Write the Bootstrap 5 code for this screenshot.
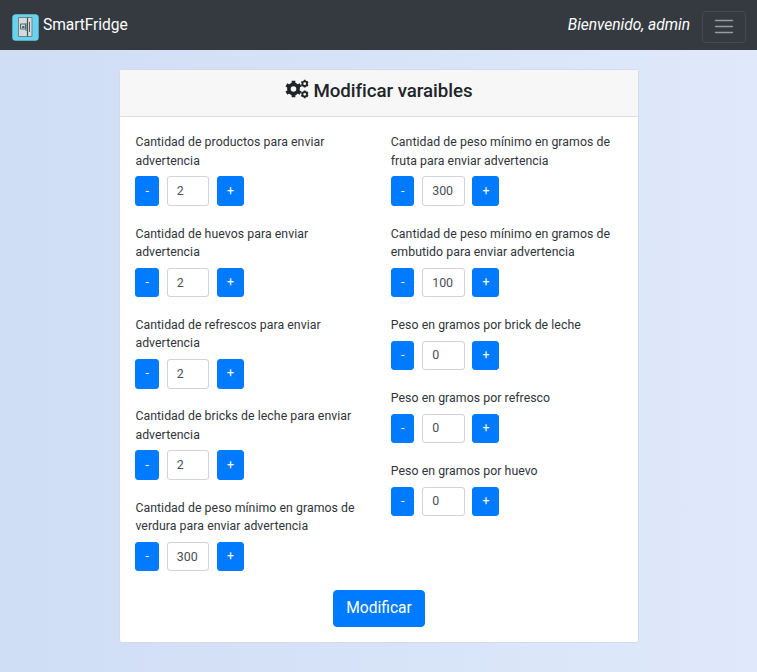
<!DOCTYPE html>
<html lang="es">
<head>
<meta charset="utf-8">
<meta name="viewport" content="width=device-width, initial-scale=1">
<title>SmartFridge</title>
<link href="https://cdn.jsdelivr.net/npm/bootstrap@5.3.0/dist/css/bootstrap.min.css" rel="stylesheet">
<style>
body{font-family:Roboto,"Liberation Sans",sans-serif;font-size:15.4px;color:#212529;min-height:672px;background:linear-gradient(90deg,#cfddf5,#dfe9fa)}
.topbar{height:50px;background:#343a40;padding:0 11px 0 12px}
.brand-text{font-size:15.6px;line-height:24px;color:#fff;letter-spacing:-.08px}
.welcome{font-size:15.6px;line-height:24px;color:#fff;letter-spacing:-.03px}
.navbar-toggler.menu-btn{width:44px;height:32px;padding:0;border:1px solid #464b51;border-radius:4px}
.panel{width:520px;height:574px;margin:19px 0 0 119px;border:1px solid #d5dbe6;border-radius:3px}
.panel-head{height:47px;background:#f7f7f7;border-bottom:1px solid #dfdfdf;padding-top:8px}
.panel-title{font-size:18.7px;line-height:26px;font-weight:500;letter-spacing:-.04px}
.panel-body{padding:16.3px 15.4px 0}
.fields{column-gap:32px}
.field-col{width:223.4px}
.field{margin-bottom:18.7px}
.field-label{display:block;font-size:12.3px;line-height:18.4px;letter-spacing:.05px;margin-bottom:6.2px;color:#30343a}
.step{height:29.7px;padding:0;font-size:12.3px;line-height:27px;background:#007bff;border-color:#007bff;border-radius:3px}
.step-minus{width:23.6px}
.step-plus{width:27px}
.steps{gap:7.8px}
.amount.form-control{width:42.5px;height:29.7px;min-height:0;padding:0 9px 1px;font-size:12.4px;color:#495057;border-color:#ced4da;border-radius:3px}
.submit{width:92px;height:37px;padding:0;font-size:15.6px;background:#007bff;border-color:#007bff;border-radius:4px}
</style>
<script src="https://cdn.jsdelivr.net/npm/bootstrap@5.3.0/dist/js/bootstrap.bundle.min.js"></script>
</head>
<body>
<nav class="topbar d-flex align-items-center justify-content-between">
  <a class="d-flex align-items-center text-decoration-none pt-1" href="#">
    <svg class="me-1" width="27" height="27" viewBox="0 0 27 27"><rect x=".3" y=".3" width="26.4" height="26.4" rx="3.5" fill="#69d3ef"/><path d="M6.5 3.5H20v19H6.5z" fill="#d3dcdd" stroke="#6e8388"/><path d="M15.5 3.5v19" stroke="#425258" stroke-width="1.2"/><path d="M8.5 10h5v5h-5zM17.5 8v10M14 9v8" fill="none" stroke="#53646a"/><path d="M10 12h2.5v2H10z" fill="#53646a"/></svg>
    <span class="brand-text mb-1">SmartFridge</span>
  </a>
  <div class="d-flex align-items-center pt-1">
    <em class="welcome me-2 pe-1 mb-1">Bienvenido, admin</em>
    <button class="navbar-toggler menu-btn d-flex align-items-center justify-content-center" type="button" aria-label="Menú">
      <svg width="20" height="18" viewBox="0 0 20 18"><path d="M1.5 2.5h17M1.5 8.5h17M1.5 14.5h17" stroke="#999c9f" stroke-width="1.3" stroke-linecap="round"/></svg>
    </button>
  </div>
</nav>
<main class="card panel">
  <div class="panel-head text-center">
    <h5 class="panel-title d-flex align-items-center justify-content-center mb-0">
      <svg class="me-1 mb-1" width="24" height="20" viewBox="0 0 24 20" fill="none" stroke="#212529">
        <g stroke-width="3.7"><circle cx="8.5" cy="10" r="4.6" stroke-width="3.6"/><path d="M8.5 1.8v3.7M8.5 14.5v3.7M1.4 5.9l3.2 1.85M12.4 12.25l3.2 1.85M1.4 14.1l3.2-1.85M12.4 7.75l3.2-1.85"/></g>
        <g id="small-gear" stroke-width="1.8"><circle cx="19.7" cy="4.7" r="2.3"/><path d="M19.7.8v1.6M19.7 7v1.6M16.3 2.75l1.4.8M21.7 5.85l1.4.8M16.3 6.65l1.4-.8M21.7 3.55l1.4-.8"/></g>
        <use href="#small-gear" y="10.6"/>
      </svg>
      <span>Modificar varaibles</span>
    </h5>
  </div>
  <div class="panel-body">
    <form>
      <div class="d-flex fields">
        <div class="field-col">
          <div class="field"><label class="field-label">Cantidad de productos para enviar advertencia</label><div class="d-flex steps"><button class="btn btn-primary step step-minus" type="button">-</button><input class="form-control amount" value="2"><button class="btn btn-primary step step-plus" type="button">+</button></div></div>
          <div class="field"><label class="field-label">Cantidad de huevos para enviar advertencia</label><div class="d-flex steps"><button class="btn btn-primary step step-minus" type="button">-</button><input class="form-control amount" value="2"><button class="btn btn-primary step step-plus" type="button">+</button></div></div>
          <div class="field"><label class="field-label">Cantidad de refrescos para enviar advertencia</label><div class="d-flex steps"><button class="btn btn-primary step step-minus" type="button">-</button><input class="form-control amount" value="2"><button class="btn btn-primary step step-plus" type="button">+</button></div></div>
          <div class="field"><label class="field-label">Cantidad de bricks de leche para enviar advertencia</label><div class="d-flex steps"><button class="btn btn-primary step step-minus" type="button">-</button><input class="form-control amount" value="2"><button class="btn btn-primary step step-plus" type="button">+</button></div></div>
          <div class="field"><label class="field-label">Cantidad de peso mínimo en gramos de verdura para enviar advertencia</label><div class="d-flex steps"><button class="btn btn-primary step step-minus" type="button">-</button><input class="form-control amount" value="300"><button class="btn btn-primary step step-plus" type="button">+</button></div></div>
        </div>
        <div class="field-col">
          <div class="field"><label class="field-label">Cantidad de peso mínimo en gramos de fruta para enviar advertencia</label><div class="d-flex steps"><button class="btn btn-primary step step-minus" type="button">-</button><input class="form-control amount" value="300"><button class="btn btn-primary step step-plus" type="button">+</button></div></div>
          <div class="field"><label class="field-label">Cantidad de peso mínimo en gramos de embutido para enviar advertencia</label><div class="d-flex steps"><button class="btn btn-primary step step-minus" type="button">-</button><input class="form-control amount" value="100"><button class="btn btn-primary step step-plus" type="button">+</button></div></div>
          <div class="field"><label class="field-label">Peso en gramos por brick de leche</label><div class="d-flex steps"><button class="btn btn-primary step step-minus" type="button">-</button><input class="form-control amount" value="0"><button class="btn btn-primary step step-plus" type="button">+</button></div></div>
          <div class="field"><label class="field-label">Peso en gramos por refresco</label><div class="d-flex steps"><button class="btn btn-primary step step-minus" type="button">-</button><input class="form-control amount" value="0"><button class="btn btn-primary step step-plus" type="button">+</button></div></div>
          <div class="field"><label class="field-label">Peso en gramos por huevo</label><div class="d-flex steps"><button class="btn btn-primary step step-minus" type="button">-</button><input class="form-control amount" value="0"><button class="btn btn-primary step step-plus" type="button">+</button></div></div>
        </div>
      </div>
      <div class="text-center"><button class="btn btn-primary submit" type="button">Modificar</button></div>
    </form>
  </div>
</main>
</body>
</html>
